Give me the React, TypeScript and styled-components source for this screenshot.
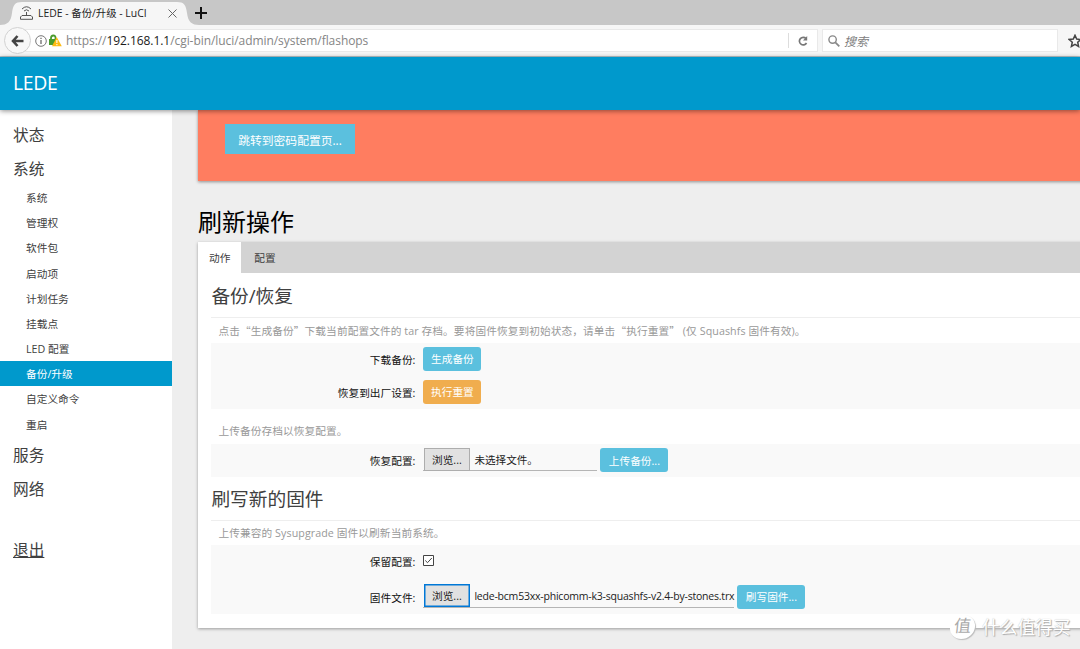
import React from "react";
import styled, { createGlobalStyle } from "styled-components";

const GlobalStyle = createGlobalStyle`
  * { box-sizing: border-box; }
  body {
    margin: 0;
    overflow: hidden;
    background: #eee;
    font-family: "Open Sans", "Noto Sans CJK SC", sans-serif;
    font-size: 10.7px;
    color: #404040;
  }
  h1, h2, h3, p, ul { margin: 0; padding: 0; font-weight: 400; }
  button { font-family: inherit; }
`;

const Page = styled.div`
  position: relative;
  display: flex;
  flex-direction: column;
  width: 1080px;
  height: 649px;
  overflow: hidden;
`;

const TabStrip = styled.div`
  display: flex;
  flex: none;
  height: 25px;
  background: #c7c7c7;
`;

const BrowserTab = styled.div`
  position: relative;
  display: flex;
  align-items: center;
  width: 196px;
  height: 25px;
  padding: 1px 0 0 20px;
  color: #222;
  font-size: 10.4px;
`;

const TabShape = styled.svg`
  position: absolute;
  left: 0;
  top: 0;
`;

const TabTitle = styled.span`
  position: relative;
  width: 130px;
  margin-left: 5px;
  padding-bottom: 2px;
  white-space: nowrap;
`;

const Glyph = styled.svg`
  position: relative;
  flex: none;
  display: block;
  fill: none;
`;

const NewTab = styled.div`
  display: flex;
  align-items: center;
  width: 14px;
  margin-left: -1px;
`;

const Toolbar = styled.div`
  display: flex;
  align-items: center;
  flex: none;
  height: 32px;
  padding-left: 4px;
  background: #f6f6f6;
  border-bottom: 1px solid #b7c5ca;
`;

const BackButton = styled.div`
  position: relative;
  z-index: 1;
  display: flex;
  flex: none;
  align-items: center;
  justify-content: center;
  width: 27px;
  height: 27px;
  margin-right: -12px;
  border: 1px solid #d2d2d2;
  border-radius: 50%;
  background: #f8f8f8;
`;

const Field = styled.div<{ $width: number; $pad: number }>`
  display: flex;
  flex: none;
  align-items: center;
  width: ${(p) => p.$width}px;
  height: 23px;
  padding-left: ${(p) => p.$pad}px;
  background: #fff;
  border: 1px solid #e9e9e9;
`;

const Url = styled.span`
  flex: 1;
  margin-left: 4px;
  font-size: 12px;
  letter-spacing: -0.06px;
  color: #858585;
  white-space: nowrap;
  b { font-weight: 400; color: #1a1a1a; }
`;

const Reload = styled.div`
  display: flex;
  align-items: center;
  justify-content: center;
  width: 29px;
  height: 15px;
  border-left: 1px solid #ddd;
`;

const SearchHint = styled.span`
  margin-left: 4px;
  font-size: 12px;
  font-style: italic;
  color: #808080;
`;

const Header = styled.header`
  position: relative;
  z-index: 2;
  display: flex;
  align-items: center;
  flex: none;
  height: 53px;
  padding: 0 0 2px 13px;
  background: #0099cc;
  box-shadow: 0 1px 5px rgba(0, 0, 0, 0.45);
  color: #fff;
  font-size: 19.4px;
  letter-spacing: -0.3px;
`;

const Body = styled.div`
  display: flex;
  flex: 1;
  min-height: 0;
`;

const Sidebar = styled.nav`
  flex: none;
  width: 172px;
  padding-top: 6.6px;
  background: #fff;
`;

const MenuHead = styled.div`
  height: 34.2px;
  padding-left: 13px;
  font-size: 15.7px;
  line-height: 37px;
`;

const MenuItem = styled.li<{ $active?: boolean }>`
  height: 25.2px;
  padding-left: 26px;
  list-style: none;
  line-height: 26.4px;
  color: ${(p) => (p.$active ? "#fff" : "#404040")};
  background: ${(p) => (p.$active ? "#0099cc" : "transparent")};
`;

const Logout = styled(MenuHead)`
  margin-top: 27px;
  text-decoration: underline;
`;

const Main = styled.main`
  flex: none;
  width: 930px;
  padding-left: 26.4px;
`;

const Warning = styled.div`
  height: 71px;
  padding: 14px 0 0 26.6px;
  background: #ff7d60;
  box-shadow: 0 1px 3px rgba(0, 0, 0, 0.4);
`;

const PasswordButton = styled.button`
  display: block;
  width: 130px;
  height: 30px;
  padding: 0;
  border: 0;
  background: #5bc0de;
  color: #fff;
  font-size: 11.8px;
  white-space: nowrap;
`;

const Title = styled.h1`
  height: 61px;
  padding-top: 23px;
  font-size: 24px;
  line-height: 36px;
  text-indent: -0.4px;
  color: #000;
`;

const Card = styled.section`
  height: 386px;
  background: #fff;
  box-shadow: 0 1px 3px rgba(0, 0, 0, 0.35);
`;

const Tabs = styled.div`
  display: flex;
  height: 30.5px;
  background: #d3d3d3;
`;

const Tab = styled.div<{ $active?: boolean }>`
  width: ${(p) => (p.$active ? 42.6 : 48)}px;
  text-align: center;
  line-height: 32px;
  background: ${(p) => (p.$active ? "#fff" : "transparent")};
`;

const Group = styled.div`
  padding-left: 13px;
`;

const Heading = styled.h2<{ $height: number }>`
  height: ${(p) => p.$height}px;
  border-bottom: 1px solid #eee;
  font-size: 18.7px;
  line-height: ${(p) => p.$height}px;
`;

const Hint = styled.p<{ $height: number }>`
  height: ${(p) => p.$height}px;
  padding-left: 7px;
  line-height: ${(p) => p.$height}px;
  letter-spacing: 0.08px;
  color: #999;
  white-space: nowrap;
`;

const Quote = styled.span`
  font-family: "Noto Sans CJK SC", sans-serif;
`;

const Rows = styled.div<{ $after?: number }>`
  margin-bottom: ${(p) => p.$after ?? 0}px;
  background: #f9f9f9;
`;

const Row = styled.div<{ $height: number; $lift?: number }>`
  display: flex;
  align-items: center;
  height: ${(p) => p.$height}px;
  padding-bottom: ${(p) => p.$lift ?? 2}px;
`;

const Label = styled.label`
  flex: none;
  width: 204px;
  margin-right: 8px;
  padding-top: 2px;
  text-align: right;
  color: #111;
`;

const Action = styled.button<{ $width: number; $tone?: string; $drop?: number }>`
  flex: none;
  width: ${(p) => p.$width}px;
  height: 24px;
  margin-top: ${(p) => p.$drop ?? 0}px;
  padding: 0;
  border: 0;
  border-radius: 3px;
  background: ${(p) => p.$tone ?? "#5bc0de"};
  color: #fff;
  font-size: 10.7px;
  white-space: nowrap;
`;

const FileInput = styled.div<{ $width: number }>`
  display: flex;
  flex: none;
  align-items: center;
  width: ${(p) => p.$width}px;
  height: 23px;
  margin-right: 3px;
  border-bottom: 1px solid #b5b5b5;
`;

const Browse = styled.span<{ $focused?: boolean }>`
  display: flex;
  flex: none;
  align-items: center;
  justify-content: center;
  width: 46px;
  height: 23px;
  margin: 0 4.5px 0 0.5px;
  border: 1px solid ${(p) => (p.$focused ? "#0078d7" : "#adadad")};
  box-shadow: ${(p) => (p.$focused ? "inset 0 0 0 0.5px #0078d7" : "none")};
  background: #e1e1e1;
  color: #222;
`;

const FileName = styled.span<{ $latin?: boolean }>`
  font-size: ${(p) => (p.$latin ? 10.5 : 10.6)}px;
  letter-spacing: ${(p) => (p.$latin ? "-0.21px" : "0")};
  color: #222;
  white-space: nowrap;
`;

const Watermark = styled.div`
  position: absolute;
  z-index: 3;
  left: 950px;
  top: 615px;
  display: flex;
  align-items: center;
  gap: 7px;
  color: #fff;
  font-size: 17.7px;
  line-height: 23px;
  text-shadow: 1px 1px 1px #aaa, 0 0 1px #bbb;
  white-space: nowrap;
`;

const Seal = styled.span`
  width: 25px;
  height: 24px;
  border-radius: 50%;
  background: #fff;
  box-shadow: 1px 1px 1px #bbb;
  color: #aaa;
  font-size: 17px;
  line-height: 22px;
  text-align: center;
  text-shadow: none;
  transform: skewX(-6deg);
`;

const systemItems = [
  "系统", "管理权", "软件包", "启动项", "计划任务",
  "挂载点", "LED 配置", "备份/升级", "自定义命令", "重启",
];

function BrowserChrome() {
  return (
    <>
      <TabStrip>
        <BrowserTab>
          <TabShape width="200" height="25">
            <path d="M0 25C7 25 11 22 12 13C13 5 15 2 22 2H177C184 2 186 5 187 13C188 22 192 25 199 25Z" fill="#f6f6f6" />
          </TabShape>
          <Glyph width="13" height="14" viewBox="0 0 13 14" stroke="#555">
            <path d="M2 3Q6.500-1.500 11 3M4 5Q6.500 2.500 9 5M6.500 6V10" />
            <path d="M2 9.500H11L12.500 11V13.300H.5V11Z" />
          </Glyph>
          <TabTitle>LEDE - 备份/升级 - LuCI</TabTitle>
          <Glyph width="9" height="9" viewBox="0 0 9 9" stroke="#666">
            <path d="M.5.5L8.500 8.500M8.500.5L.5 8.500" />
          </Glyph>
        </BrowserTab>
        <NewTab>
          <Glyph width="12" height="12" viewBox="0 0 12 12" stroke="#111" strokeWidth="2">
            <path d="M6 0V12M0 6H12" />
          </Glyph>
        </NewTab>
      </TabStrip>
      <Toolbar>
        <BackButton>
          <Glyph width="13" height="12" viewBox="0 0 13 12" stroke="#444" strokeWidth="2.600">
            <path d="M6.500 1L2 6L6.500 11M2 6H12.500" />
          </Glyph>
        </BackButton>
        <Field $width={799} $pad={15}>
          <Glyph width="12" height="12" viewBox="0 0 12 12" stroke="#777">
            <circle cx="6" cy="6" r="5.300" />
            <path d="M6 5V9M6 2.700V4" strokeWidth="1.400" />
          </Glyph>
          <Glyph width="14" height="13" viewBox="0 0 14 13" style={{ marginLeft: 1 }}>
            <path d="M3 6V4Q3 1.500 5.300 1.500T7.500 4V6" stroke="#4a9b2d" strokeWidth="1.800" />
            <path d="M1 5H9V11H1Z" fill="#4a9b2d" />
            <path d="M8.700 3L13.800 12.300H4Z" fill="#fdbb12" />
            <path d="M8.900 6V9M8.900 10V11.200" stroke="#fff" strokeWidth="1.100" />
          </Glyph>
          <Url>https://<b>192.168.1.1</b>/cgi-bin/luci/admin/system/flashops</Url>
          <Reload>
            <Glyph width="10" height="10" viewBox="0 0 10 10" stroke="#777" strokeWidth="1.700">
              <path d="M8 2.500A3.800 3.800 0 1 0 8.500 7" />
              <path d="M9.200 0V4.500H5Z" fill="#777" stroke="none" />
            </Glyph>
          </Reload>
        </Field>
        <Field $width={236} $pad={5} style={{ marginLeft: 4 }}>
          <Glyph width="12" height="12" viewBox="0 0 12 12" stroke="#888" strokeWidth="1.400">
            <circle cx="4.600" cy="4.600" r="3.700" />
            <path d="M7.300 7.300L11.300 11.300" strokeWidth="1.800" />
          </Glyph>
          <SearchHint>搜索</SearchHint>
        </Field>
        <Glyph width="14" height="14" viewBox="0 0 14 14" stroke="#444" strokeWidth="1.500" style={{ marginLeft: 10 }}>
          <path d="M7 1.300L8.700 5.100L12.800 5.500L9.700 8.200L10.600 12.400L7 10.300L3.400 12.400L4.300 8.200L1.200 5.500L5.300 5.100Z" />
        </Glyph>
      </Toolbar>
    </>
  );
}

export default function App() {
  return (
    <Page>
      <GlobalStyle />
      <BrowserChrome />
      <Header>LEDE</Header>
      <Body>
        <Sidebar>
          <MenuHead>状态</MenuHead>
          <MenuHead>系统</MenuHead>
          <ul>
            {systemItems.map((name) => (
              <MenuItem key={name} $active={name === "备份/升级"}>{name}</MenuItem>
            ))}
          </ul>
          <MenuHead>服务</MenuHead>
          <MenuHead>网络</MenuHead>
          <Logout>退出</Logout>
        </Sidebar>
        <Main>
          <Warning>
            <PasswordButton>跳转到密码配置页...</PasswordButton>
          </Warning>
          <Title>刷新操作</Title>
          <Card>
            <Tabs>
              <Tab $active>动作</Tab>
              <Tab>配置</Tab>
            </Tabs>
            <Group>
              <Heading $height={45.5}>备份/恢复</Heading>
              <Hint $height={25}>
                点击<Quote>“</Quote>生成备份<Quote>”</Quote>下载当前配置文件的 tar 存档。要将固件恢复到初始状态，请单击<Quote>“</Quote>执行重置<Quote>”</Quote> (仅 Squashfs 固件有效)。
              </Hint>
              <Rows $after={10}>
                <Row $height={33}>
                  <Label>下载备份:</Label>
                  <Action $width={58}>生成备份</Action>
                </Row>
                <Row $height={33}>
                  <Label>恢复到出厂设置:</Label>
                  <Action $width={58} $tone="#f0ad4e">执行重置</Action>
                </Row>
              </Rows>
              <Hint $height={25}>上传备份存档以恢复配置。</Hint>
              <Rows>
                <Row $height={33}>
                  <Label>恢复配置:</Label>
                  <FileInput $width={174}>
                    <Browse>浏览...</Browse>
                    <FileName>未选择文件。</FileName>
                  </FileInput>
                  <Action $width={68} $drop={1.8}>上传备份...</Action>
                </Row>
              </Rows>
              <Heading $height={44}>刷写新的固件</Heading>
              <Hint $height={24}>上传兼容的 Sysupgrade 固件以刷新当前系统。</Hint>
              <Rows>
                <Row $height={33} $lift={2}>
                  <Label>保留配置:</Label>
                  <Glyph width="11" height="11" viewBox="0 0 11 11" stroke="#444">
                    <path d="M.5.5H10.500V10.500H.5Z" fill="#fff" />
                    <path d="M2.300 5.500L4.500 7.700L8.800 3" />
                  </Glyph>
                </Row>
                <Row $height={36} $lift={0}>
                  <Label>固件文件:</Label>
                  <FileInput $width={311}>
                    <Browse $focused>浏览...</Browse>
                    <FileName $latin>lede-bcm53xx-phicomm-k3-squashfs-v2.4-by-stones.trx</FileName>
                  </FileInput>
                  <Action $width={68} $drop={1}>刷写固件...</Action>
                </Row>
              </Rows>
            </Group>
          </Card>
        </Main>
      </Body>
      <Watermark>
        <Seal>值</Seal>
        什么值得买
      </Watermark>
    </Page>
  );
}
